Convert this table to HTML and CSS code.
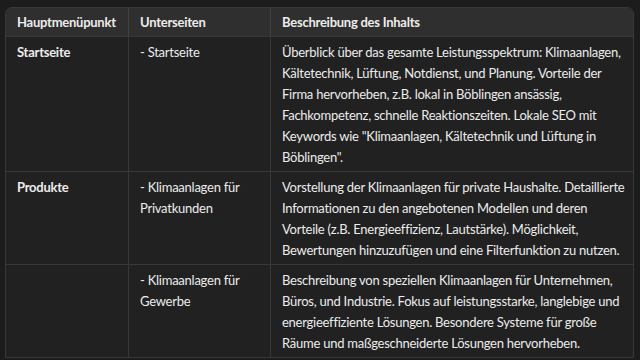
FILE: index.html
```html
<!DOCTYPE html>
<html lang="de">
<head>
<meta charset="utf-8">
<link rel="stylesheet" href="styles.css">
</head>
<body>
<div class="wrap">
<table class="tbl">
<colgroup><col class="c1"><col class="c2"><col class="c3"></colgroup>
<thead>
<tr><th>Hauptmenüpunkt</th><th>Unterseiten</th><th>Beschreibung des Inhalts</th></tr>
</thead>
<tbody>
<tr>
<td class="strong">Startseite</td>
<td>- Startseite</td>
<td class="desc">Überblick über das gesamte Leistungsspektrum: Klimaanlagen,<br>Kältetechnik, Lüftung, Notdienst, und Planung. Vorteile der<br>Firma hervorheben, z.B. lokal in Böblingen ansässig,<br>Fachkompetenz, schnelle Reaktionszeiten. Lokale SEO mit<br>Keywords wie "Klimaanlagen, Kältetechnik und Lüftung in<br>Böblingen".</td>
</tr>
<tr>
<td class="strong">Produkte</td>
<td>- Klimaanlagen für Privatkunden</td>
<td class="desc">Vorstellung der Klimaanlagen für private Haushalte. Detaillierte<br>Informationen zu den angebotenen Modellen und deren<br>Vorteile (z.B. Energieeffizienz, Lautstärke). Möglichkeit,<br>Bewertungen hinzuzufügen und eine Filterfunktion zu nutzen.</td>
</tr>
<tr>
<td></td>
<td>- Klimaanlagen für Gewerbe</td>
<td class="desc">Beschreibung von speziellen Klimaanlagen für Unternehmen,<br>Büros, und Industrie. Fokus auf leistungsstarke, langlebige und<br>energieeffiziente Lösungen. Besondere Systeme für große<br>Räume und maßgeschneiderte Lösungen hervorheben.</td>
</tr>
</tbody>
</table>
</div>
</body>
</html>
```
FILE: styles.css
```css
html, body {
  margin: 0;
  padding: 0;
  background: #1c1c1c;
}
body {
  font-family: Lato, "Open Sans", sans-serif;
  font-size: 13px;
  line-height: 21px;
  letter-spacing: -0.25px;
  color: #ececec;
  height: 360px;
  overflow: hidden;
}
.wrap {
  padding: 7px 6px 0 5px;
}
.tbl {
  width: 629px;
  table-layout: fixed;
  border-collapse: separate;
  border-spacing: 0;
  background: #212121;
  border: 1px solid #383838;
  border-radius: 7px 7px 0 0;
  overflow: hidden;
}
.c1 { width: 122px; }
.c2 { width: 142px; }
.c3 { width: auto; }
th, td {
  text-align: left;
  vertical-align: top;
  padding: 5px 11px 3px 11px;
  border-left: 1px solid #383838;
  border-top: 1px solid #383838;
}
th:first-child, td:first-child { border-left: 0; }
th {
  background: #2f2f2f;
  font-weight: 700;
  border-top: 0;
  border-left-color: #414141;
  padding-top: 4px;
  padding-bottom: 3px;
}
.desc {
  white-space: nowrap;
  padding-right: 4px;
}
.strong { font-weight: 700; }
```
